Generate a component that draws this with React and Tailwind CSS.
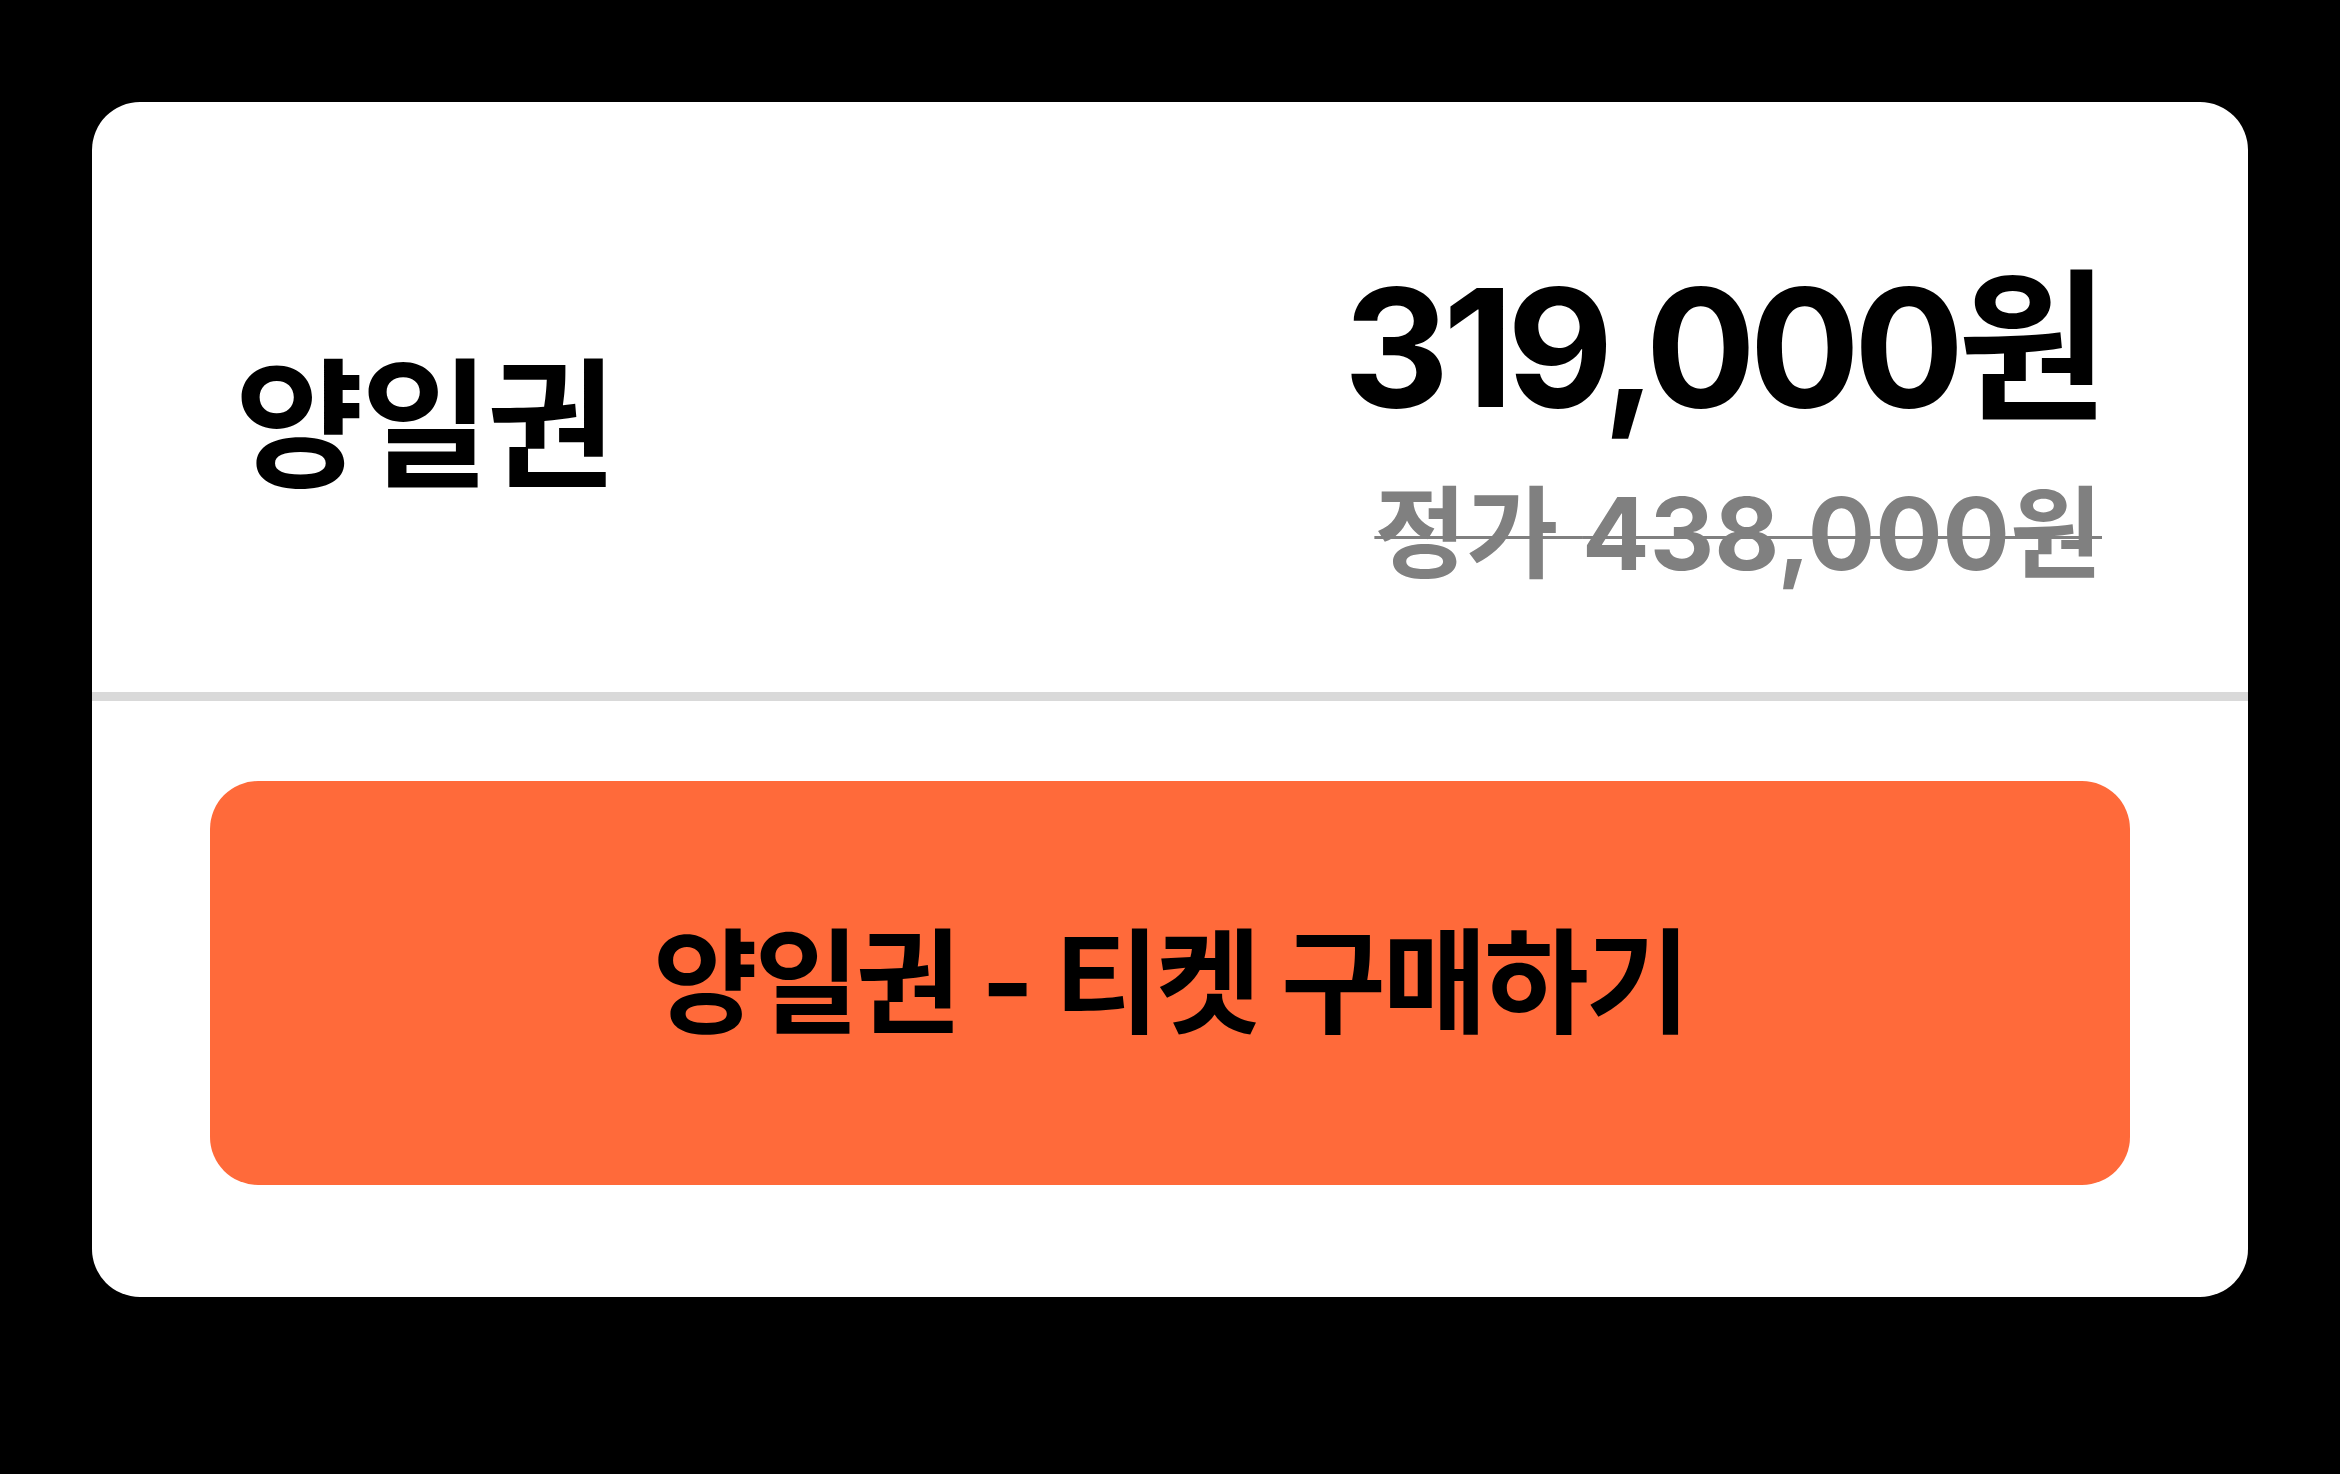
const ticket = {
  name: '양일권',
  price: '319,000원',
  listPrice: '438,000원',
}

export default function App() {
  return (
    <div className="min-h-screen bg-black px-[92px] pt-[102px] font-['Inter','Noto_Sans_CJK_KR',sans-serif]">
      <div className="overflow-hidden rounded-[48px] bg-white">
        {/* Ticket summary */}
        <div className="flex h-[590px] items-center justify-between pt-[56px] pl-[143px] pr-[146px]">
          <h2 className="text-[140px] font-bold leading-none tracking-[-0.02em] text-black">
            {ticket.name}
          </h2>
          <div className="flex flex-col items-end">
            <p className="text-[164px] font-bold leading-none tracking-[-0.04em] text-black">
              {ticket.price}
            </p>
            <p className="mt-[54px] text-[100px] font-bold leading-none text-[#808080] line-through decoration-[3px]">
              정가 {ticket.listPrice}
            </p>
          </div>
        </div>

        <div className="h-[9px] bg-[#d9d9d9]" />

        {/* Purchase button */}
        <div className="px-[118px] pt-[80px] pb-[112px]">
          <button className="flex h-[404px] w-full items-center justify-center rounded-[48px] bg-[#ff6a3a] text-[114px] font-bold leading-none tracking-[-0.03em] text-black">
            {ticket.name} - 티켓 구매하기
          </button>
        </div>
      </div>
    </div>
  )
}
